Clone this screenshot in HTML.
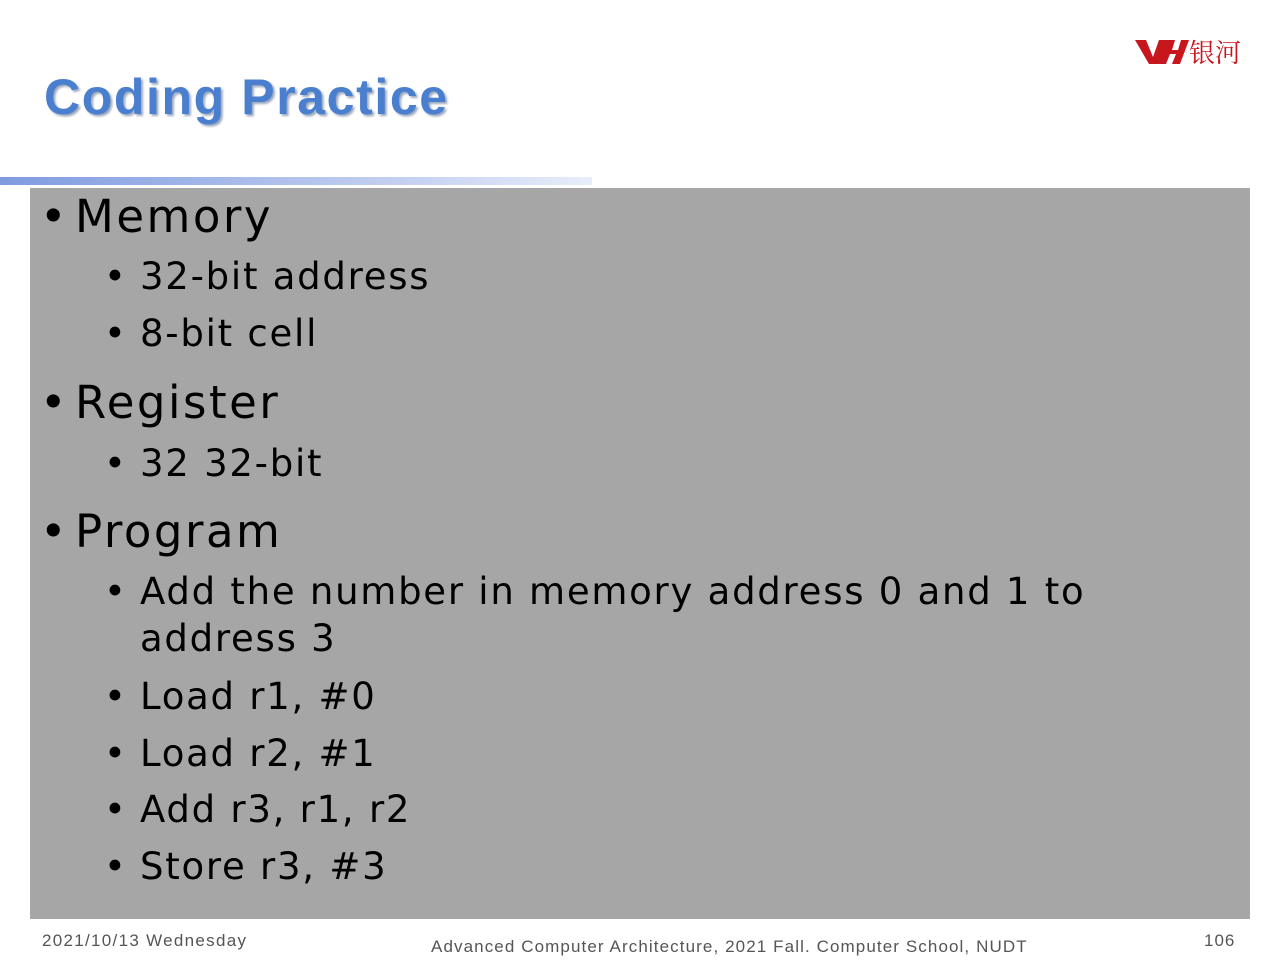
<!DOCTYPE html>
<html><head><meta charset="utf-8"><style>
body{margin:0;width:1280px;height:960px;background:#fff;position:relative;overflow:hidden;font-family:"Liberation Sans",sans-serif}
.t{position:absolute;left:44px;top:68px;font-size:50px;font-weight:bold;color:#4a7fcf;text-shadow:2px 2px 2px #9aa8bd;letter-spacing:1.6px}
.bar{position:absolute;left:0;top:177px;width:592px;height:8px;background:linear-gradient(90deg,#7f9be0,#c6d2f2 70%,#e8edf9)}
.box{position:absolute;left:30px;top:188px;width:1220px;height:731px;background:#a6a6a6}
.l{position:absolute;color:#000;white-space:nowrap;line-height:1;font-family:"DejaVu Sans",sans-serif}
.a{font-size:45px;left:75px;letter-spacing:2.5px}.b{font-size:37px;left:140px;letter-spacing:1.75px}
.f{position:absolute;font-size:17px;color:#555;top:932px}
</style></head><body>
<div class="t">Coding Practice</div>
<svg style="position:absolute;left:1133px;top:36px" width="110" height="32" viewBox="0 0 110 32">
<path d="M2 4h11l7 17 6-17h5l6 0-12 24h-9z" fill="#c8161d"/>
<path d="M34 4h8l-3 10h6l3-10h8l-9 24h-8l4-10h-6l-4 10h-8z" fill="#c8161d"/>
<text x="56" y="26" font-family="Noto Serif CJK SC,serif" font-size="26" fill="#c8161d">银河</text>
</svg>
<div class="bar"></div>
<div class="box"></div>
<div class="l a" style="left:40px;top:194px">•</div><div class="l a" style="top:194px">Memory</div>
<div class="l b" style="left:104px;top:258px">•</div><div class="l b" style="top:258px">32-bit address</div>
<div class="l b" style="left:104px;top:315px">•</div><div class="l b" style="top:315px">8-bit cell</div>
<div class="l a" style="left:40px;top:380px">•</div><div class="l a" style="top:380px">Register</div>
<div class="l b" style="left:104px;top:445px">•</div><div class="l b" style="top:445px">32 32-bit</div>
<div class="l a" style="left:40px;top:509px">•</div><div class="l a" style="top:509px">Program</div>
<div class="l b" style="left:104px;top:573px">•</div><div class="l b" style="top:573px">Add the number in memory address 0 and 1 to</div>
<div class="l b" style="top:620px">address 3</div>
<div class="l b" style="left:104px;top:678px">•</div><div class="l b" style="top:678px">Load r1, #0</div>
<div class="l b" style="left:104px;top:735px">•</div><div class="l b" style="top:735px">Load r2, #1</div>
<div class="l b" style="left:104px;top:791px">•</div><div class="l b" style="top:791px">Add r3, r1, r2</div>
<div class="l b" style="left:104px;top:848px">•</div><div class="l b" style="top:848px">Store r3, #3</div>
<div class="f" style="left:42px;top:931px;letter-spacing:1.3px">2021/10/13 Wednesday</div>
<div class="f" style="left:431px;top:937px;letter-spacing:1.1px">Advanced Computer Architecture, 2021 Fall. Computer School, NUDT</div>
<div class="f" style="left:1204px;top:931px;letter-spacing:1px">106</div>
</body></html>
